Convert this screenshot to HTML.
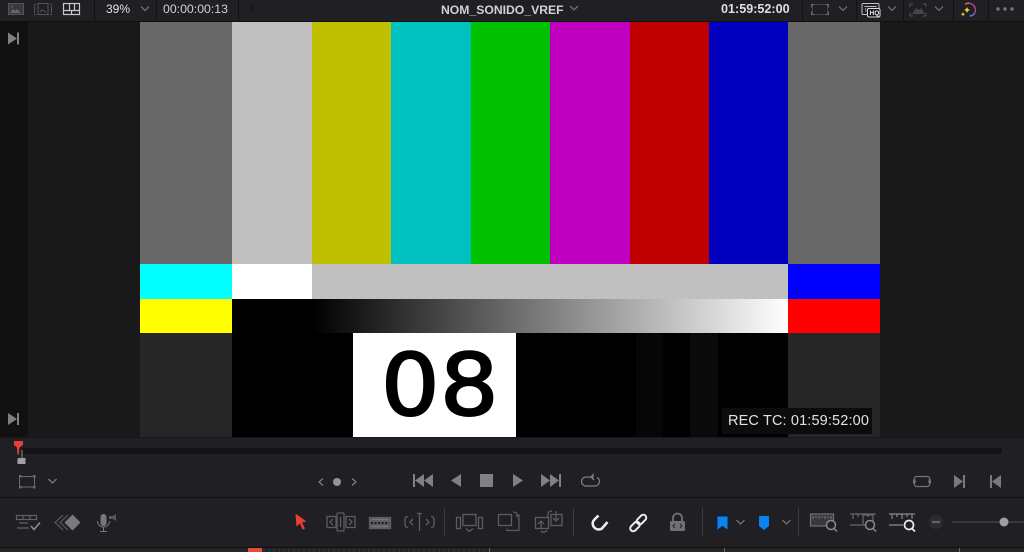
<!DOCTYPE html>
<html><head><meta charset="utf-8"><style>
html,body{margin:0;padding:0;width:1024px;height:552px;overflow:hidden;background:#1f1f24}
div{position:absolute}
.t{font-family:"Liberation Sans",sans-serif;color:#d2d2d2;white-space:nowrap;font-size:12px;line-height:14px;filter:blur(.25px)}
svg{position:absolute;left:0;top:0;filter:blur(.35px)}
</style></head><body>
<div style="left:0;top:0;width:1024px;height:21px;background:#1f1f24"></div>
<div style="left:0;top:21px;width:1024px;height:1px;background:#111"></div>
<div style="left:0;top:22px;width:1024px;height:415px;background:#191919"></div>
<div style="left:0;top:22px;width:28px;height:415px;background:#111"></div>
<div style="left:140px;top:22px;width:92px;height:242px;background:#686868"></div>
<div style="left:232px;top:22px;width:80px;height:242px;background:#c0c0c0"></div>
<div style="left:312px;top:22px;width:79px;height:242px;background:#c0c000"></div>
<div style="left:391px;top:22px;width:80px;height:242px;background:#00c0c0"></div>
<div style="left:471px;top:22px;width:79px;height:242px;background:#00c000"></div>
<div style="left:550px;top:22px;width:80px;height:242px;background:#c000c0"></div>
<div style="left:630px;top:22px;width:79px;height:242px;background:#c00000"></div>
<div style="left:709px;top:22px;width:79px;height:242px;background:#0000c0"></div>
<div style="left:788px;top:22px;width:92px;height:242px;background:#686868"></div>
<div style="left:140px;top:264px;width:92px;height:35px;background:#0ff"></div>
<div style="left:232px;top:264px;width:80px;height:35px;background:#fff"></div>
<div style="left:312px;top:264px;width:476px;height:35px;background:#c0c0c0"></div>
<div style="left:788px;top:264px;width:92px;height:35px;background:#00f"></div>
<div style="left:140px;top:299px;width:92px;height:34px;background:#ff0"></div>
<div style="left:232px;top:299px;width:80px;height:34px;background:#000"></div>
<div style="left:312px;top:299px;width:476px;height:34px;background:linear-gradient(90deg,#000,#fff)"></div>
<div style="left:788px;top:299px;width:92px;height:34px;background:#f00"></div>
<div style="left:140px;top:333px;width:92px;height:104px;background:#262626"></div>
<div style="left:232px;top:333px;width:556px;height:104px;background:#000"></div>
<div style="left:788px;top:333px;width:92px;height:104px;background:#262626"></div>
<div style="left:636px;top:333px;width:27px;height:104px;background:#060606"></div>
<div style="left:690px;top:333px;width:28px;height:104px;background:#0a0a0a"></div>
<div style="left:353px;top:333px;width:163px;height:104px;background:#fff"></div>
<div style="left:381px;top:333px;height:104px;font-family:'DejaVu Sans',sans-serif;font-size:92px;line-height:106px;color:#000;letter-spacing:.5px;white-space:nowrap;-webkit-text-stroke:2.200px #000;transform:scaleY(.93)">08</div>
<div style="left:722px;top:408px;width:150px;height:26px;background:#0c0c0c"></div>
<div class="t" style="left:728px;top:413px;font-size:14.500px;line-height:16px;color:#e2e2e2;letter-spacing:.14px">REC TC: 01:59:52:00</div>

<div class="t" style="left:106px;top:2px;font-size:12px;color:#dde3ea">39%</div>
<div class="t" style="left:163px;top:2px;font-size:12.300px">00:00:00:13</div>
<div class="t" style="left:441px;top:3px;font-size:12.200px;font-weight:bold;color:#d2d2d2">NOM_SONIDO_VREF</div>
<div class="t" style="left:721px;top:2px;font-size:12.600px;font-weight:bold;color:#e0e0e0">01:59:52:00</div>

<div style="left:0;top:437px;width:1024px;height:1px;background:#17171a"></div>
<div style="left:22px;top:448px;width:980px;height:6px;background:#141416;border-radius:2px"></div>
<div style="left:0;top:497px;width:1024px;height:1px;background:#0f0f11"></div>
<div style="left:0;top:547px;width:1024px;height:1px;background:#0f0f11"></div>
<div style="left:0;top:548px;width:1024px;height:4px;background:#232328"></div>
<div style="left:248px;top:548px;width:14px;height:4px;background:#e64b3d"></div>

<svg width="1024" height="552" viewBox="0 0 1024 552" fill="none">
<!-- top separators -->
<g stroke="#111114"><path d="M94.500 0V21M156.500 0V21M238.500 0V21M802.500 0V21M856.500 0V21M903.500 0V21M953.500 0V21M988.500 0V21"/></g>
<!-- top left icons -->
<rect x="8.500" y="3.500" width="15" height="11" fill="#3a3a3e" stroke="#55555a"/>
<path d="M10 13l3-4 2 2 2-2 4 4z" fill="#66666b"/><circle cx="12" cy="6.500" r="1" fill="#66666b"/>
<path d="M34 4.500h2M34 14.500h2M50 4.500h2M50 14.500h2M38 3.500h10v11h-10zM34.500 6v7M51.500 6v7" stroke="#55555a"/>
<path d="M40 12l2-2 2 1 2 1" stroke="#55555a"/>
<g stroke="#c8c8c8" stroke-width="1.200"><rect x="63.500" y="3.500" width="16" height="11"/><path d="M63.500 10.500h16M71.500 10.500v4M69.500 3.500v7M74.500 3.500v7"/></g>
<path d="M141 6.500l4 4 4-4" stroke="#707075" stroke-width="1.300"/>
<circle cx="251.500" cy="8" r="1.500" fill="#2c2c30" stroke="#111"/>
<path d="M570 6l4 4 4-4" stroke="#707075" stroke-width="1.300"/>
<!-- top right icons -->
<rect x="812.500" y="4.500" width="15" height="10" stroke="#434348"/>
<path d="M811.500 7.500v-3h3M825.500 4.500h3v3M811.500 11.500v3h3M825.500 14.500h3v-3" stroke="#6a6a6f"/>
<path d="M839 6.500l4 4 4-4M888 6.500l4 4 4-4M935 6.500l4 4 4-4" stroke="#68686d" stroke-width="1.300"/>
<rect x="862" y="3.500" width="17" height="11" rx="1" stroke="#c0c0c0"/><path d="M864.500 6.500h12M865 9h1.500M865 11h1.500" stroke="#c0c0c0"/>
<rect x="867.500" y="8.500" width="12.500" height="8.500" rx="1.500" fill="#151518" stroke="#d8d8d8"/>
<text x="869.500" y="15" font-family="'Liberation Sans',sans-serif" font-size="6.500" font-weight="bold" fill="#f0f0f0">HQ</text>
<path d="M910 4h3M910 4v3M926 4h-3M926 4v3M910 16h3M910 16v-3M926 16h-3M926 16v-3" stroke="#55555a"/>
<path d="M912 14l4-6 3 2 2-2 4 6z" fill="#444449"/>
<path d="M968 3.500a6.500 6.500 0 0 1 6 10.500" stroke="#c2408f" stroke-width="1.500"/>
<path d="M974.500 13.500a6.500 6.500 0 0 1-5 2.500" stroke="#4a7fd0" stroke-width="1.500"/>
<path d="M965 4.500a6 6 0 0 1 4-1.500" stroke="#e06a30" stroke-width="1.500"/>
<path d="M967 7l1 2 2 1-2 1-1 2-1-2-2-1 2-1zM963 12l.700 1.500 1.500.700-1.500.700-.700 1.500-.700-1.500-1.500-.700 1.500-.700z" fill="#e8d040"/>
<g fill="#77777c"><circle cx="998" cy="9" r="1.700"/><circle cx="1005" cy="9" r="1.700"/><circle cx="1012" cy="9" r="1.700"/></g>
<!-- left side -->
<path d="M8 32.500l9 6-9 6zM17 32.500h2v12h-2z" fill="#808084"/>
<path d="M8 413l9 6-9 6zM17 413h2v12h-2z" fill="#808084"/>
<!-- scrubber markers -->
<path d="M22 450v8" stroke="#8a8a8e" stroke-width="1"/>
<path d="M18.500 458h7v6h-8v-5z" fill="#a0a0a4"/>
<path d="M14 441h9v4l-3.500 2.500L18.500 455h-1L17 447.500 14 445z" fill="#e64038"/>
<!-- transport row -->
<rect x="19.500" y="476.500" width="15" height="10.500" stroke="#6a6a6f"/>
<g fill="#6a6a6f"><rect x="19" y="475" width="2.500" height="2.500"/><rect x="33" y="475" width="2.500" height="2.500"/><rect x="19" y="486" width="2.500" height="2.500"/><rect x="33" y="486" width="2.500" height="2.500"/></g>
<path d="M48.500 479l4 4 4-4" stroke="#7a7a7f" stroke-width="1.300"/>
<path d="M323 478.500l-4 3.500 4 3.500M352 478.500l4 3.500-4 3.500" stroke="#808085" stroke-width="1.200"/>
<circle cx="337" cy="482" r="4" fill="#929297"/>
<g fill="#808085">
<path d="M413 474h2v13h-2zM415 480.500l9-6.500v13zM424 480.500l9-6.500v13z"/>
<path d="M451 480.500l10-6.500v13z"/>
<rect x="480" y="474" width="13" height="13"/>
<path d="M513 474l10 6.500-10 6.500z"/>
<path d="M541 474l9 6.500-9 6.500zM550 474l9 6.500-9 6.500zM559 474h2v13h-2z"/>
</g>
<path d="M594 477h-8a4.500 4.500 0 0 0 0 9h9a4.500 4.500 0 0 0 2-8.500M594 474l-3 3 3 3" stroke="#808085" stroke-width="1.300"/>
<rect x="914.500" y="476.500" width="15" height="10" rx="2" stroke="#737378" stroke-width="1.200"/>
<path d="M913 479v5l3.500-2.500zM931 479v5l-3.500-2.500z" fill="#737378"/>
<path d="M954 475l9 6.500-9 6.500zM963 475h2v13h-2z" fill="#7a7a7e"/>
<path d="M1001 475l-9 6.500 9 6.500zM990 475h2v13h-2z" fill="#7a7a7e"/>
<!-- bottom toolbar left -->
<g stroke="#616166" stroke-width="1.200"><rect x="16.500" y="515.500" width="20" height="4"/><path d="M23 515.500v4M30 515.500v4M19 523h9M17 528h12" /></g>
<path d="M31 526l3 3.500 6-7" stroke="#8c8c90" stroke-width="1.600"/>
<path d="M63 515l-8 7.500 8 7.500M68 515l-8 7.500 8 7.500" stroke="#55555a" stroke-width="1.200"/>
<path d="M72.500 514.500l8 8-8 8-8-8z" fill="#7a7a7e"/>
<rect x="100.500" y="514" width="6" height="12" rx="3" fill="#77777c"/>
<path d="M97.500 521a6 6 0 0 0 12 0M103.500 527v4M100 531.500h7" stroke="#77777c"/>
<path d="M109 516h4l3-2v7l-3-2h-4z" fill="#55555a"/>
<path d="M295.500 513.500l11 8-4.500 1 3 6-2.500 1-2.500-6-3.500 3z" fill="#e8402f"/>
<g stroke="#5c5c61" stroke-width="1.300">
<rect x="327" y="516.500" width="9" height="11"/><rect x="346" y="516.500" width="9" height="11"/><rect x="337" y="513" width="7" height="18" rx="1" fill="#1f1f24"/>
<path d="M333 519l-3 3 3 3M349 519l3 3-3 3M340.500 517v10"/>
<rect x="369.500" y="517.500" width="21" height="11" fill="#5c5c61"/>
<path d="M372 519.500h16M372 526.500h16" stroke="#77777c"/>
<path d="M371 523h18" stroke="#1f1f24" stroke-dasharray="2 1.500" stroke-width="2"/>
<path d="M419.500 514v17M417 513.500h5M413 519l-3 3 3 3M426 519l3 3-3 3M408 516.500c-2 0-3 1-3 3v5c0 2 1 3 3 3M431 516.500c2 0 3 1 3 3v5c0 2-1 3-3 3" />
<rect x="456.500" y="517.500" width="4" height="11"/><rect x="478.500" y="517.500" width="4" height="11"/><rect x="463" y="514.500" width="13" height="11"/><path d="M466 528.500l3.500 3 3.500-3"/>
<rect x="498.500" y="514.500" width="13" height="11"/><path d="M507 528.500v2h12v-12h-1M513 512c3 0 5 2 5 4M516 515l2 2 2-2"/>
<rect x="535.500" y="517.500" width="13" height="11"/><rect x="551" y="514.500" width="11" height="11"/>
<path d="M541 529v-7M538 524l3-3 3 3M556 511v10M553 518l3 3 3-3M541 531c2 2 5 1 6-1M548 518v-4c0-2 2-3 4-3"/>
</g>
<path d="M444.500 508v28M573.500 508v28M702.500 508v28M798.500 508v28" stroke="#3a3a3f"/>
<path d="M598.500 515.500L594 520C590 525 596 532 602 528.500L607.500 522" stroke="#ececec" stroke-width="2.600"/>
<g stroke="#ececec" stroke-width="2" fill="none">
<rect x="-5.500" y="-3" width="11" height="6" rx="3" transform="translate(635 526.500) rotate(-45)"/>
<rect x="-5.500" y="-3" width="11" height="6" rx="3" transform="translate(641.500 519.500) rotate(-45)"/>
</g>
<rect x="670" y="521" width="15" height="10" rx="1.500" fill="#707075"/>
<path d="M673 521v-3a4.500 4.500 0 0 1 9 0v3" stroke="#707075" stroke-width="1.800"/>
<path d="M675 524l-2 2 2 2M680 524l2 2-2 2" stroke="#222"/>
<path d="M717 516h11v14.500l-5.500-4-5.500 4z" fill="#0a84ee" stroke="#0b2540"/>
<path d="M736.500 520l4 4 4-4M782.500 520l4 4 4-4" stroke="#707075" stroke-width="1.300"/>
<path d="M760 516h8a1 1 0 0 1 1 1v9l-5 4-5-4v-9a1 1 0 0 1 1-1z" fill="#0a84ee"/>
<g stroke="#707075" stroke-width="1.200"><rect x="810.500" y="514" width="23" height="12" fill="#38383d"/><path d="M813 519v-3M816 518v-2M819 519v-3M822 518v-2M825 519v-3M828 518v-2M831 519v-3"/></g>
<g stroke="#8a8a8e" stroke-width="1.500"><circle cx="831" cy="525" r="4.500" fill="#1f1f24"/><path d="M834 528.500l3 3"/></g>
<g stroke="#68686d" stroke-width="1.200"><path d="M850 514h26M853 514v5M858 514v3M863 514v5M868 514v3M873 514v5M850 525h12M863 515h10v10h-10z"/></g>
<g stroke="#8a8a8e" stroke-width="1.500"><circle cx="870" cy="525" r="4.500" fill="#1f1f24"/><path d="M873 528.500l3 3"/></g>
<g stroke="#8a8a8e" stroke-width="1.200"><path d="M889 514h26M892 514v5M897 514v3M902 514v5M907 514v3M912 514v5M889 525h14"/></g>
<g stroke="#f0f0f0" stroke-width="1.700"><circle cx="909" cy="525" r="4.500" fill="#1f1f24"/><path d="M912 528.500l3 3"/></g>
<circle cx="936" cy="522" r="7" fill="#2c2c31"/><path d="M932 522h8" stroke="#76767b" stroke-width="1.500"/>
<path d="M952 522h72" stroke="#37373c" stroke-width="2"/>
<circle cx="1004" cy="522" r="4.500" fill="#a0a0a4"/>
<!-- ruler ticks -->
<path d="M264 552v-3M269 552v-3M274 552v-3M279 552v-3M284 552v-3M289 552v-3M294 552v-3M299 552v-3M304 552v-3M309 552v-3M314 552v-3M319 552v-3M324 552v-3M329 552v-3M334 552v-3M339 552v-3M344 552v-3M349 552v-3M354 552v-3M359 552v-3M364 552v-3M369 552v-3M374 552v-3M379 552v-3M384 552v-3M389 552v-3M394 552v-3M399 552v-3M404 552v-3M409 552v-3M414 552v-3M419 552v-3M424 552v-3M429 552v-3M434 552v-3M439 552v-3M444 552v-3M449 552v-3M454 552v-3M459 552v-3M464 552v-3M469 552v-3M474 552v-3M479 552v-3M484 552v-3" stroke="#34343a"/>
<path d="M489.500 552v-4M724.500 552v-4M959.500 552v-4" stroke="#66666b"/>
</svg>
</body></html>
